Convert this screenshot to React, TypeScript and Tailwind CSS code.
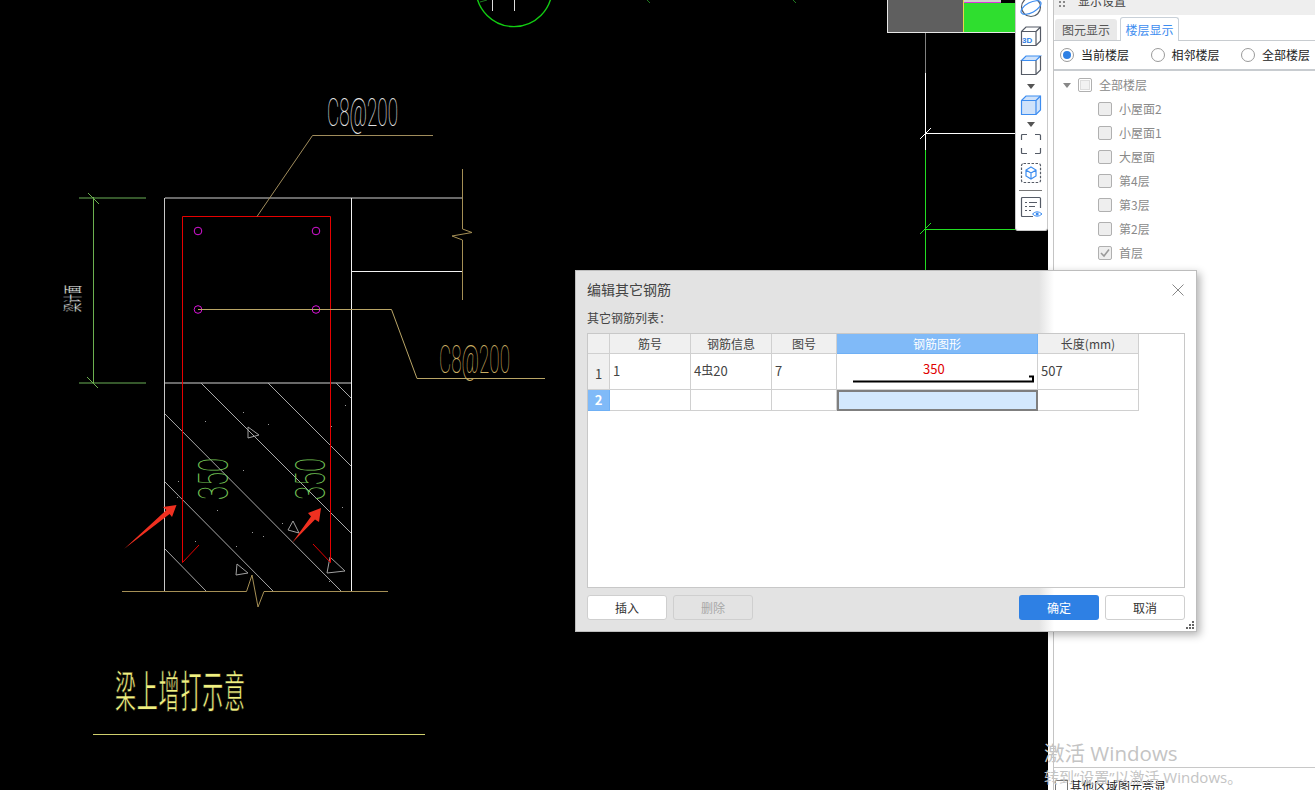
import React from "react";

const floors = ["小屋面2", "小屋面1", "大屋面", "第4层", "第3层", "第2层", "首层"];

const hatch = [
  "268,383 351,466",
  "201,383 351,533",
  "336,383 351,398",
  "165,414 341,591",
  "165,482 273,591",
  "165,549 206,591",
];

const wedges = [
  "248,427 259,435 248,438",
  "293,521 299,533 288,530",
  "330,557 345,571 327,573",
  "237,564 248,573 236,575",
];

const specks = [
  [205, 421], [268, 424], [243, 412], [345, 405], [331, 426], [243, 470], [178, 481], [177, 497],
  [217, 510], [282, 523], [252, 532], [263, 536], [342, 507], [195, 541], [329, 581], [236, 546],
];

const Drawing = () => (
  <svg width="1049" height="790" className="block">
    {/* top column mark */}
    <circle cx="514" cy="-11.4" r="38" fill="none" stroke="#12cc12" strokeWidth="1.4" />
    <path d="M492.5 0V11M514.5 0V11" stroke="#ddd" />
    <path d="M480 2L487 0M650 3L647 0M796 3L793 0" stroke="#1f7a1f" />

    {/* right grid line */}
    <path d="M925.5 32V73" stroke="#808080" />
    <path d="M925.5 73V150M925 133.5H1015M920 139L931 128" stroke="#fff" />
    <path d="M925.5 150V270M925 229.5H1015M920 234L931 223" stroke="#22dd22" />

    {/* dimension */}
    <path d="M79 198H146M79 383H146" stroke="#47753a" strokeWidth="1.5" />
    <path d="M93.5 197V383M88 193L99 204M87 377L98 388" stroke="#6cb04f" />
    <text
      transform="translate(80 312) rotate(-90) scale(1 2.1)"
      fontFamily="Noto Sans CJK SC"
      fontSize="9"
      textLength="27"
      lengthAdjust="spacingAndGlyphs"
      fill="#f4f4f4"
      stroke="#000"
      strokeWidth="0.2"
    >
      梁计面
    </text>

    {/* beam outline */}
    <path d="M164.5 198V591" stroke="#c8c8c8" />
    <path d="M165 198H462M165 383H351" stroke="#8c8c8c" strokeWidth="1.6" />
    <path d="M351.5 198V591M351 271.5H462" stroke="#f2f2f2" />
    <path d="M462.5 169V229L472 232.5L452 236L462.5 240V300" fill="none" stroke="#a58f55" />

    {hatch.map((h) => (
      <polyline key={h} points={h} fill="none" stroke="#a8a8a8" />
    ))}
    {wedges.map((w) => (
      <polygon key={w} points={w} fill="none" stroke="#a0a0a0" />
    ))}
    {specks.map(([x, y]) => (
      <rect key={`${x}-${y}`} x={x} y={y} width="1" height="1" fill="#9a9a9a" />
    ))}
    <path d="M122 591.5H246.5L252 575L258 607L264 591.5H388" fill="none" stroke="#a58f55" />

    {/* stirrup */}
    <path d="M199 545L182.5 562.5V216.5H330.5V562.5L313 544" fill="none" stroke="#e60000" />
    {[[198, 231], [316, 231], [198, 309.5], [316, 309.5]].map(([cx, cy]) => (
      <circle key={`${cx}-${cy}`} cx={cx} cy={cy} r="3.8" fill="none" stroke="#d914d9" />
    ))}

    {/* leaders */}
    <path d="M257 216.5L312.5 135.5H433" fill="none" stroke="#a08c5c" />
    <path d="M198 309.5H391.5L417 378.5H545" fill="none" stroke="#b9a566" />
    <text
      x="327"
      y="126"
      fontFamily="Roboto"
      fontWeight="100"
      fontSize="39"
      textLength="71"
      lengthAdjust="spacingAndGlyphs"
      fill="#e4e4e4"
    >
      C8@200
    </text>
    <text
      x="439"
      y="373"
      fontFamily="Roboto"
      fontWeight="100"
      fontSize="39"
      textLength="71"
      lengthAdjust="spacingAndGlyphs"
      fill="#c9ad62"
    >
      C8@200
    </text>

    {/* lap length */}
    <text
      transform="translate(228 500) rotate(-90)"
      fontFamily="Roboto"
      fontWeight="100"
      fontSize="42"
      textLength="42"
      lengthAdjust="spacingAndGlyphs"
      fill="#74c556"
    >
      350
    </text>
    <text
      transform="translate(325 500) rotate(-90)"
      fontFamily="Roboto"
      fontWeight="100"
      fontSize="42"
      textLength="42"
      lengthAdjust="spacingAndGlyphs"
      fill="#74c556"
    >
      350
    </text>

    {/* markup arrows */}
    <polygon points="124,549 166.4,510.1 163,507 176.5,505 172,517 169.6,513.9" fill="#f03020" />
    <polygon points="292,543 311,516.4 308,513 321,508 319,522 315,519.6" fill="#f03020" />

    {/* caption */}
    <text
      transform="translate(115 708) scale(1 2.1)"
      fontFamily="Noto Sans CJK SC"
      fontSize="21"
      textLength="130"
      fill="#f0f080"
      stroke="#000"
      strokeWidth="0.35"
    >
      梁上增打示意
    </text>
    <path d="M93 734.5H425" stroke="#cfcf6d" />
  </svg>
);

const ToolIcon = ({ children, className }: { children: React.ReactNode; className?: string }) => (
  <svg width="24" height="24" viewBox="0 0 24 24" fill="none" className={className}>
    {children}
  </svg>
);

const Caret = () => (
  <div className="h-0 w-0 border-x-[4px] border-t-[5px] border-x-transparent border-t-[#555]" />
);

const Toolbar = () => (
  <div className="absolute right-0 top-0 flex h-[231px] w-[33px] flex-col items-center overflow-hidden rounded-b-[3px] border-x border-b border-[#c9c9c9] bg-white pr-[2px]">
    <ToolIcon className="-mt-[5px] shrink-0">
      <circle cx="12" cy="12" r="9.5" stroke="#555b66" strokeWidth="1.2" />
      <ellipse cx="12" cy="12.5" rx="11" ry="5" transform="rotate(-28 12 12.5)" stroke="#3d8df0" strokeWidth="1.2" />
    </ToolIcon>
    <ToolIcon className="mt-[5px] shrink-0">
      <path d="M2.5 7.5L7 3H21.5V17L17 21.5H2.5Z M2.5 7.5H17V21.5 M17 7.5L21.5 3" stroke="#555b66" strokeWidth="1.2" />
      <text x="3" y="19" fontFamily="Liberation Sans" fontWeight="700" fontSize="8" fill="#2e80e4">3D</text>
    </ToolIcon>
    <ToolIcon className="mt-[5px] shrink-0">
      <path d="M2.5 7.5L7 3H21.5L17 7.5Z" fill="#cfe2fa" stroke="#3d8df0" strokeWidth="1.2" />
      <path d="M2.5 7.5V21.5H17L21.5 17V3M17 7.5V21.5" stroke="#555b66" strokeWidth="1.2" />
    </ToolIcon>
    <div className="mt-[7px] shrink-0"><Caret /></div>
    <ToolIcon className="mt-[4px] shrink-0">
      <path d="M2.5 7.5L7 3H21.5V17L17 21.5H2.5Z" fill="#cfe2fa" stroke="#3d8df0" strokeWidth="1.2" />
      <path d="M2.5 7.5H17V21.5M17 7.5L21.5 3" stroke="#3d8df0" strokeWidth="1.2" />
    </ToolIcon>
    <div className="mt-[5px] shrink-0"><Caret /></div>
    <ToolIcon className="mt-[5px] shrink-0">
      <path d="M2.5 8V3.5Q2.5 2.5 3.5 2.5H8M16 2.5H20.5Q21.5 2.5 21.5 3.5V8M21.5 16V20.5Q21.5 21.5 20.5 21.5H16M8 21.5H3.5Q2.5 21.5 2.5 20.5V16" stroke="#555b66" strokeWidth="1.2" />
    </ToolIcon>
    <ToolIcon className="mt-[5px] shrink-0">
      <rect x="2.5" y="2.5" width="19" height="19" rx="2" stroke="#555b66" strokeWidth="1.2" strokeDasharray="2.5 1.5" />
      <path d="M12 6L17 9V15L12 18L7 15V9ZM7 9L12 12L17 9M12 12V18" stroke="#3d8df0" strokeWidth="1.2" />
    </ToolIcon>
    <div className="mt-[5px] h-px w-[23px] shrink-0 bg-[#777]" />
    <ToolIcon className="mt-[4px] shrink-0">
      <path d="M14 21.5H3.5Q2.5 21.5 2.5 20.5V3.5Q2.5 2.5 3.5 2.5H20.5Q21.5 2.5 21.5 3.5V13" stroke="#555b66" strokeWidth="1.2" />
      <path d="M6 7.5H8M10 7.5H18M6 11.5H8M10 11.5H16M6 15.5H8M10 15.5H12" stroke="#555b66" />
      <path d="M13.5 19Q18 14.5 23 19Q18 23.5 13.5 19Z" fill="#fff" stroke="#3d8df0" />
      <circle cx="18.2" cy="19" r="1.5" fill="#3d8df0" />
    </ToolIcon>
  </div>
);

const MiniMap = () => (
  <div className="absolute right-[33px] top-0 flex h-[33px] w-[128px] border-b border-l border-[#e8e8e8]">
    <div className="w-[75px] bg-[#5f5f5f]" />
    <div className="flex-1 border-l border-[#e6d84a]">
      <div className="relative h-[3px] overflow-hidden bg-[#d0d0d0]">
        <div className="absolute bottom-0 left-0 right-[14px] h-px bg-[#dd33dd]" />
        <div className="absolute right-0 top-0 h-[3px] w-[14px] bg-black" />
      </div>
      <div className="h-[29px] bg-[#2fde2f]" />
    </div>
  </div>
);

const FloorCheck = ({ checked }: { checked?: boolean }) => (
  <span className="flex h-[14px] w-[14px] shrink-0 items-center justify-center rounded-[2px] border border-[#b0b0b0] bg-[#eeeeee]">
    {checked && (
      <svg width="12" height="12" viewBox="0 0 12 12" fill="none">
        <path d="M2 6L5 9L10 2.5" stroke="#9a9a9a" strokeWidth="1.6" />
      </svg>
    )}
  </span>
);

const Radio = ({ label, active }: { label: string; active?: boolean }) => (
  <div className="flex w-[90.5px] shrink-0 items-center gap-[7px]">
    <span className="flex h-[14px] w-[14px] items-center justify-center rounded-full border border-[#9a9a9a] bg-white">
      {active && <span className="h-[8px] w-[8px] rounded-full bg-[#2e80e4]" />}
    </span>
    <span className="text-[12px] text-[#222]">{label}</span>
  </div>
);

const SidePanel = () => (
  <aside className="flex w-[267px] shrink-0 flex-col bg-white pl-[5px]">
    <div className="flex min-h-0 flex-1 flex-col border-l border-[#c4c4c4]">
      <div className="flex h-[15px] shrink-0 gap-[13px] overflow-hidden bg-[#eeeeee] pl-[5px]">
        <div className="grid h-[7px] grid-cols-2 gap-[2px] pt-px">
          <i className="h-[2px] w-[2px] bg-[#888]" />
          <i className="h-[2px] w-[2px] bg-[#888]" />
          <i className="h-[2px] w-[2px] bg-[#888]" />
          <i className="h-[2px] w-[2px] bg-[#888]" />
        </div>
        <span className="-mt-[7px] text-[12px] leading-[16px] text-[#444]">显示设置</span>
      </div>
      <div className="flex h-[26px] shrink-0 items-end gap-[3px] border-b border-[#c8ccd0] pl-px">
        <div className="flex h-[21px] w-[62px] items-center justify-center rounded-t-[3px] bg-[#e9e9e9] text-[12px] text-[#555]">
          图元显示
        </div>
        <div className="-mb-px flex h-[24px] w-[59px] items-center justify-center rounded-t-[3px] border-x border-t border-[#c8d0d8] bg-white text-[12px] text-[#3d8df0]">
          楼层显示
        </div>
      </div>
      <div className="flex h-[30px] shrink-0 items-center border-b-2 border-[#c8ccd0] pl-[6px]">
        <Radio label="当前楼层" active />
        <Radio label="相邻楼层" />
        <Radio label="全部楼层" />
      </div>
      <div className="flex-1 pt-[2px] text-[12px] text-[#8a8a8a]">
        <div className="flex h-[24px] items-center pl-[9px]">
          <span className="h-0 w-0 border-x-[4px] border-t-[5px] border-x-transparent border-t-[#888]" />
          <span className="ml-[7px] flex h-[14px] w-[14px] items-center justify-center rounded-[2px] border border-[#b0b0b0] bg-white">
            <span className="h-[10px] w-[10px] border border-[#ddd] bg-[#f2f2f2]" />
          </span>
          <span className="ml-[7px]">全部楼层</span>
        </div>
        {floors.map((floor) => (
          <div key={floor} className="flex h-[24px] items-center gap-[7px] pl-[44px]">
            <FloorCheck checked={floor === "首层"} />
            <span>{floor}</span>
          </div>
        ))}
      </div>
      <div className="flex h-[23px] shrink-0 gap-[2px] border-t border-[#c8c8c8] pl-[1px] pt-[12px]">
        <span className="h-[14px] w-[13px] shrink-0 border border-[#777] bg-white" />
        <span className="-mt-[2px] text-[12px] leading-[16px] text-[#222]">其他区域图元亮显</span>
      </div>
    </div>
  </aside>
);

const headCell = "flex items-center justify-center border-b border-r border-[#d0d0d0] bg-[#f0f0f0] text-[#444]";
const bodyCell = "flex items-center border-b border-r border-[#d0d0d0] pb-[2px] pl-[3px] text-[13px] text-[#444]";

const Dialog = () => (
  <div className="absolute left-[575px] top-[270px] flex h-[362px] w-[622px] flex-col border border-[#bdbdbd] bg-[linear-gradient(to_right,#e3e3e3_463px,#fff_478px)] px-[11px] shadow-[3px_3px_8px_rgba(0,0,0,0.3)]">
    <div className="flex h-[37px] shrink-0 items-center justify-between">
      <span className="text-[14px] text-[#444]">编辑其它钢筋</span>
      <svg width="12" height="12" viewBox="0 0 12 12" className="mr-[1px]">
        <path d="M0.5 0.5L11.5 11.5M11.5 0.5L0.5 11.5" stroke="#888" />
      </svg>
    </div>
    <div className="h-[25px] shrink-0 pt-[1px] text-[12px] leading-[18px] text-[#444]">其它钢筋列表：</div>
    <div className="h-[255px] shrink-0 border border-[#c8c8c8] bg-white text-[12px]">
      <div className="grid w-[551px] grid-cols-[22px_81px_81px_65px_201px_101px] grid-rows-[20px_36px_21px]">
        <div className={headCell} />
        <div className={headCell}>筋号</div>
        <div className={headCell}>钢筋信息</div>
        <div className={headCell}>图号</div>
        <div className="flex items-center justify-center border-b border-r border-[#6fb0f5] bg-[#80baf8] text-white">钢筋图形</div>
        <div className={headCell}>长度(mm)</div>

        <div className={`${headCell} pt-[4px] text-[13px]`}>1</div>
        <div className={bodyCell}>1</div>
        <div className={bodyCell}>
          4<span className="-translate-y-px text-[12px]">虫</span>20
        </div>
        <div className={bodyCell}>7</div>
        <div className="relative border-b border-r border-[#d0d0d0]">
          <span className="absolute left-[86px] top-[7px] text-[13px] leading-[16px] text-[#e00000]">350</span>
          <svg width="200" height="35" className="absolute left-0 top-0">
            <path d="M16 27.5H196V22.5H192" fill="none" stroke="#000" strokeWidth="2" />
          </svg>
        </div>
        <div className={bodyCell}>507</div>

        <div className="flex items-center justify-center border-b border-r border-[#6fb0f5] bg-[#80baf8] text-[13px] font-bold text-white">2</div>
        <div className={bodyCell} />
        <div className={bodyCell} />
        <div className={bodyCell} />
        <div className="border-2 border-[#7f7f7f] bg-[#d3e8fd]" />
        <div className={bodyCell} />
      </div>
    </div>
    <div className="mt-[7px] flex shrink-0 gap-[6px] text-[12px]">
      <button className="h-[25px] w-[80px] rounded-[3px] border border-[#cfcfcf] bg-white text-[#333]">插入</button>
      <button className="h-[25px] w-[80px] rounded-[3px] border border-[#cfcfcf] bg-[#e3e3e3] text-[#a8a8a8]">删除</button>
      <button className="ml-auto h-[25px] w-[80px] rounded-[3px] bg-[#2e80e4] text-white">确定</button>
      <button className="h-[25px] w-[80px] rounded-[3px] border border-[#cfcfcf] bg-white text-[#333]">取消</button>
    </div>
    <div className="absolute bottom-[2px] right-[2px] grid grid-cols-3 gap-px">
      <i className="col-start-3 h-[2px] w-[2px] bg-[#666]" />
      <i className="col-start-2 h-[2px] w-[2px] bg-[#666]" />
      <i className="h-[2px] w-[2px] bg-[#666]" />
      <i className="h-[2px] w-[2px] bg-[#666]" />
      <i className="h-[2px] w-[2px] bg-[#666]" />
      <i className="h-[2px] w-[2px] bg-[#666]" />
    </div>
  </div>
);

const App = () => (
  <div className="relative flex h-[790px] w-[1315px] overflow-hidden bg-black font-['Noto_Sans_CJK_SC',sans-serif]">
    <main className="relative w-[1048px] shrink-0 overflow-hidden">
      <Drawing />
      <MiniMap />
      <Toolbar />
    </main>
    <SidePanel />
    <Dialog />
    <div className="pointer-events-none absolute left-[1044px] top-[740px] text-[#c4c4c4]">
      <div className="font-['Open_Sans','Noto_Sans_CJK_SC',sans-serif] text-[20.5px] leading-[27px]">激活 Windows</div>
      <div className="font-['Open_Sans','Noto_Sans_CJK_SC',sans-serif] text-[15px] leading-[20px]">转到“设置”以激活 Windows。</div>
    </div>
  </div>
);

export default App;
